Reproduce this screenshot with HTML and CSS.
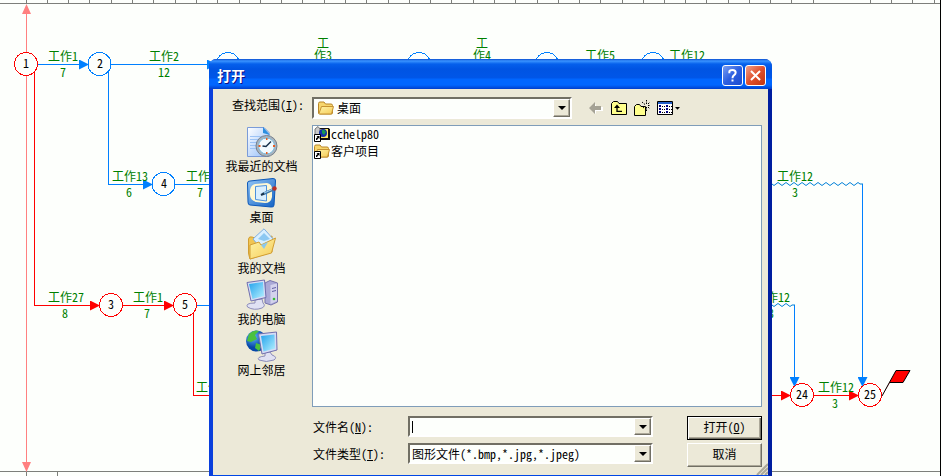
FILE: index.html
```html
<!DOCTYPE html>
<html lang="zh-CN">
<head>
<meta charset="utf-8">
<title>打开</title>
<link rel="stylesheet" href="styles.css">
</head>
<body>
<main class="chart">
<svg class="network" aria-label="网络图">
  <defs>
    <marker id="arrow-blue" markerUnits="userSpaceOnUse" markerWidth="10" markerHeight="10" refX="9" refY="5" orient="auto"><path class="fill-blue" d="M0 0L10 5L0 10Z"/></marker>
    <marker id="arrow-red" markerUnits="userSpaceOnUse" markerWidth="10" markerHeight="10" refX="9" refY="5" orient="auto"><path class="fill-red" d="M0 0L10 5L0 10Z"/></marker>
  </defs>
  <g class="ruler">
    <path d="M0 3.500H940M26.500 0V3M47.500 0V3M68.500 0V3M89.500 0V3M111.500 0V3M132.500 0V3M153.500 0V3M175.500 0V3M196.500 0V3M217.500 0V3M239.500 0V3M260.500 0V3M281.500 0V3M302.500 0V3M324.500 0V3M345.500 0V3M366.500 0V3M388.500 0V3M409.500 0V3M430.500 0V3M451.500 0V3M473.500 0V3M494.500 0V3M515.500 0V3M537.500 0V3M558.500 0V3M579.500 0V3M600.500 0V3M622.500 0V3M643.500 0V3M664.500 0V3M685.500 0V3M706.500 0V3M728.500 0V3M749.500 0V3M770.500 0V3M791.500 0V3M813.500 0V3M870.500 0V3M891.500 0V3M912.500 0V3M934.500 0V3"/>
    <path d="M0 471.500H940M26.500 472V476M57.500 472V476"/>
  </g>
  <path class="edge-frame" d="M940.500 0V476"/>
  <path class="axis" d="M26.500 10V464"/>
  <path class="axis-tip" d="M26.500 4L31 14H22ZM22 462H31L26.500 472Z"/>

  <g class="line blue">
    <path d="M37 64.500H88" marker-end="url(#arrow-blue)"/>
    <path d="M111 64.500H216" marker-end="url(#arrow-blue)"/>
    <path d="M108.500 70V184.500H152" marker-end="url(#arrow-blue)"/>
    <path d="M175 184.500H215M196 305.500H215"/>
    <path d="M862.500 184V386" marker-end="url(#arrow-blue)"/>
    <path d="M794.500 305V386" marker-end="url(#arrow-blue)"/>
  </g>
  <g class="line red">
    <path d="M34.500 70V305.500H99" marker-end="url(#arrow-red)"/>
    <path d="M122 305.500H173" marker-end="url(#arrow-red)"/>
    <path d="M193.500 312V395.500H215"/>
    <path d="M765 395.500H790" marker-end="url(#arrow-red)"/>
    <path d="M813 395.500H858" marker-end="url(#arrow-red)"/>
  </g>
  <path class="wave" d="M772 184q2 3 4 0t4 0t4 0t4 0t4 0t4 0t4 0t4 0t4 0t4 0t4 0t4 0t4 0t4 0t4 0t4 0t4 0t4 0t4 0t4 0t4 0t4 0h3M772 305q2 3 4 0t4 0t4 0t4 0t4 0h3"/>

  <g class="node blue">
    <circle cx="99.500" cy="64" r="11.500"/><circle cx="163.500" cy="184" r="11.500"/>
    <circle cx="228" cy="64" r="11.500"/><circle cx="419" cy="64" r="11.500"/>
    <circle cx="547" cy="64" r="11.500"/><circle cx="653" cy="64" r="11.500"/>
  </g>
  <g class="node red">
    <circle cx="26" cy="64" r="11.500"/><circle cx="111" cy="305" r="11.500"/><circle cx="185" cy="305" r="11.500"/>
    <circle cx="802" cy="395" r="11.500"/><circle cx="870" cy="395" r="11.500"/>
  </g>
  <g class="number">
    <text x="26" y="68">1</text><text x="100" y="68">2</text><text x="164" y="188">4</text>
    <text x="111" y="309">3</text><text x="185" y="309">5</text><text x="802" y="399">24</text><text x="870" y="399">25</text>
  </g>
  <g class="task">
    <text x="48" y="61">工作1</text><text x="60" y="77">7</text>
    <text x="149" y="61">工作2</text><text x="158" y="77">12</text>
    <text x="112" y="181">工作13</text><text x="126" y="197">6</text>
    <text x="186" y="181">工作1</text><text x="197" y="197">7</text>
    <text x="48" y="302">工作27</text><text x="62" y="318">8</text>
    <text x="133" y="302">工作1</text><text x="144" y="318">7</text>
    <text x="196" y="392">工作1</text>
    <text x="317" y="48">工</text><text x="314" y="60">作3</text>
    <text x="476" y="48">工</text><text x="473" y="60">作4</text>
    <text x="585" y="60">工作5</text><text x="669" y="60">工作12</text>
    <text x="777" y="181">工作12</text><text x="792" y="197">3</text>
    <text x="754" y="302">工作12</text><text x="768" y="318">3</text>
    <text x="818" y="392">工作12</text><text x="832" y="408">3</text>
  </g>
  <path class="flag" d="M882 396L896 370.500H910L903 382.500H890"/>
</svg>
</main>

<section class="dialog" role="dialog" aria-labelledby="dialog-title">
  <header class="titlebar">
    <h1 id="dialog-title">打开</h1>
    <button class="caption help" type="button" aria-label="帮助"><svg viewBox="0 0 21 21"><path d="M7 8V6.500Q7 4.500 10.500 4.500T14 7.500Q14 9 12 10.300Q10.500 11.300 10.500 13.500M10.500 15V17.200"/></svg></button>
    <button class="caption close" type="button" aria-label="关闭"><svg viewBox="0 0 21 21"><path d="M5.500 5.500L15.500 15.500M15.500 5.500L5.500 15.500"/></svg></button>
  </header>
  <form class="content">
    <label class="look-label" for="look-in">查找范围(<u>I</u>):</label>
    <div class="look-row">
      <div class="combo look">
        <svg class="icon16" viewBox="0 0 16 16"><use href="#folder"/></svg>
        <select id="look-in"><option>桌面</option></select>
        <span class="drop"></span>
      </div>
      <div class="tools">
        <button type="button" aria-label="后退"><svg viewBox="0 0 16 16"><path fill="#fff" d="M3 9L8 4V7H15V11H8V14Z"/><path fill="#a5a295" d="M1 8L7 2V6H13V10H7V14Z"/></svg></button>
        <button type="button" aria-label="向上一级"><svg viewBox="0 0 16 16"><path fill="#ffff8c" stroke="#000" d="M.5 14.500V3.500L2.500 1.500H6.500L8 3.500H15.500V14.500Z"/><path fill="none" stroke="#000" stroke-width="1.300" d="M6 6V11.300H11"/><path d="M3 8L6 4.500L9 8Z"/></svg></button>
        <button type="button" aria-label="新建文件夹"><svg viewBox="0 0 16 16"><path fill="#ffff8c" stroke="#000" d="M.5 15.500V6.500L2.500 4.500H5.500L7 6.500H11.500V15.500Z"/><path stroke="#000" stroke-dasharray="1.500 1" d="M12.500 0V4M12.500 7V11M8 2L11 4.500M14 7L16 9M9 8L11 6.500M14 4L16 2M14 5.500H16"/></svg></button>
        <button class="views" type="button" aria-label="查看"><svg viewBox="0 0 24 16"><path fill="#fff" stroke="#000" d="M.5 1.500H15.500V14.500H.5Z"/><path fill="#2461c9" d="M1 2H15V4H1Z"/><path fill="#000080" d="M2 5H4V7H2ZM2 8H4V10H2ZM2 11H4V13H2ZM9 5H11V7H9ZM9 8H11V10H9ZM9 11H11V13H9Z"/><path stroke="#000" stroke-dasharray="1 1" d="M5 6.500H8M5 9.500H8M5 12.500H8M12 6.500H15M12 9.500H15M12 12.500H15"/><path d="M18 7H23L20.500 9.700Z"/></svg></button>
      </div>
    </div>

    <nav class="places" aria-label="位置">
      <button type="button"><svg viewBox="0 0 32 32"><path fill="url(#paper)" stroke="#7a9bd8" d="M1.500 1.500H18L23 6.500V30.500H1.500Z"/><path fill="#2c8fe0" d="M17 1L24 9L17 7Z"/><path stroke="#9cc3f5" d="M4 10.500H17M4 13.500H14M4 16.500H12M4 19.500H11M4 22.500H12"/><circle cx="20.500" cy="20" r="10.500" fill="#a9b4bf" stroke="#75818d"/><circle cx="20.500" cy="20" r="8" fill="#f2fbff" stroke="#78b9dc"/><path fill="none" stroke="#17324b" stroke-width="1.500" d="M25 15.500L20 20.500L16.500 20"/><path fill="#e85d20" d="M20 12H21.500V14H20ZM20 26H21.500V28H20ZM12.500 19H14.500V21H12.500ZM27 19H29V21H27Z"/></svg><span>我最近的文档</span></button>
      <button type="button"><svg viewBox="0 0 32 32"><path fill="url(#desk)" stroke="#0c58b9" d="M1.500 6Q1.500 4 4 4L27 1.500Q30 1.500 29.500 4L28 28Q28 30.500 25 30L4 28Q2 28 2 25Z"/><path fill="#fff8d3" d="M9 7L21 6Q26 7 26 12V20Q25 26 19 26L10 25Q4 23 4 18V13Q5 8 9 7Z"/><path fill="#d9efff" stroke="#4c91dc" d="M9.500 9.500L20.500 8.500V24L9.500 22.500Z"/><path stroke="#3f78a8" stroke-width="3" d="M17 17L27 12.500"/><path stroke="#a5d4f5" d="M18 16L26 12.500"/><path stroke="#17324b" stroke-width="2" d="M15 18L18 16.500"/><circle cx="28.500" cy="11.500" r="2.200" fill="#ba3026"/></svg><span>桌面</span></button>
      <button type="button"><svg viewBox="0 0 32 32"><path fill="#f1c553" stroke="#d29e32" d="M2.500 11Q3 8 6 9L9 10L10 13L26 8V24L4 31Q3 28 2.500 25Z"/><path fill="#d8efff" stroke="#7faee0" d="M7 11L18 .8L28 12L18 24Z"/><path fill="#8cc8f2" d="M12 11L18 5L24 11L18 13Z"/><path fill="url(#gold)" stroke="#d29e32" d="M4 17L13 14L15 17L29.500 10L25.500 25L4 31Z"/><path fill="#8bc8ee" d="M15 17L22 14L18 21Z"/></svg><span>我的文档</span></button>
      <button type="button"><svg viewBox="0 0 32 32"><path fill="#aaa9d6" stroke="#7774ac" d="M19 4L24 1.500L31.500 4V23L25 26L19 24Z"/><path fill="#d4d3ed" d="M24.500 6L31 4.500V22L24.500 25Z"/><path stroke="#6260a5" d="M26 9.500L30 8.500M26 12.500L30 11.500"/><circle cx="28" cy="20" r="1.300" fill="#36bd32"/><path fill="#e0e1f3" stroke="#8c8cba" d="M9 21L16 20L17 24Q20 27 16 29Q8 32 1.500 28Q-1 24 9 24Z"/><path fill="#d6dcf5" stroke="#706fae" d="M1 3.500L18.500 1L20 18.500L5 22Z"/><path fill="url(#screen)" d="M3 5L17 3L18 17L6.500 20Z"/></svg><span>我的电脑</span></button>
      <button type="button"><svg viewBox="0 0 32 32"><circle cx="10.500" cy="11" r="10.500" fill="url(#globe)"/><path fill="#4bc13d" d="M3 4Q8 -1 13 1L9 5L11 9L5 12L1 11ZM10 13L16 15L13 21L9 18ZM16 3L20 7L17 10Z"/><path fill="#e0e1f3" stroke="#8c8cba" d="M19 22H24L26 25Q32 27 28 30Q20 33 13 30Q10 27 19 26Z"/><path fill="#d6dcf5" stroke="#706fae" d="M12.500 4L30.500 2L31 20L16 24Z"/><path fill="url(#screen)" d="M15 6L28.500 4.500L29 18.500L17.500 21.500Z"/></svg><span>网上邻居</span></button>
    </nav>

    <ul class="files">
      <li><button type="button"><svg class="icon16" viewBox="0 0 16 16"><path fill="#ffec65" stroke="#111" d="M3.500 2.500H15V13H3.500Z"/><path fill="#c9c9c9" stroke="#777" d="M1 12V3L4 .5L6 3V12Z"/><path fill="#111" d="M14 3H16V14H5V12H14Z"/><circle cx="9" cy="7" r="4" fill="#1230a5"/><path fill="#149b52" d="M8 4H10L12 6L10 9L8 7Z"/><use href="#shortcut"/></svg>cchelp80</button></li>
      <li><button type="button"><svg class="icon16" viewBox="0 0 16 16"><use href="#folder"/><use href="#shortcut"/></svg>客户项目</button></li>
    </ul>

    <div class="fields">
      <label for="file-name">文件名(<u>N</u>):</label>
      <div class="combo"><input id="file-name" type="text" placeholder=" "><span class="drop"></span></div>
      <button class="action default" type="submit">打开(<u>O</u>)</button>
      <label for="file-type">文件类型(<u>T</u>):</label>
      <div class="combo"><select id="file-type"><option>图形文件(*.bmp,*.jpg,*.jpeg)</option></select><span class="drop"></span></div>
      <button class="action" type="button">取消</button>
    </div>
  </form>
  <svg class="grip" viewBox="0 0 12 12"><path d="M1 12L12 1M5 12L12 5M9 12L12 9"/></svg>
</section>

<svg class="symbols" aria-hidden="true">
  <defs>
    <linearGradient id="paper" x2="1" y2="1"><stop stop-color="#fff"/><stop offset="1" stop-color="#91bdfa"/></linearGradient>
    <linearGradient id="desk" x2="1" y2="1"><stop stop-color="#94c7f6"/><stop offset="1" stop-color="#1261c4"/></linearGradient>
    <linearGradient id="gold" x2="1" y2="1"><stop stop-color="#fff4a8"/><stop offset="1" stop-color="#f5cc58"/></linearGradient>
    <linearGradient id="screen" x2="1" y2="1"><stop stop-color="#23a2ec"/><stop offset="1" stop-color="#b5f1ff"/></linearGradient>
    <radialGradient id="globe" cx=".35" cy=".3"><stop stop-color="#65b9ff"/><stop offset="1" stop-color="#0647a8"/></radialGradient>
    <g id="folder"><path fill="#f7d66d" stroke="#b98628" d="M.5 13V3.500Q.5 2 2 2H6L7.500 4H13Q14.500 4 14.500 5.500V13Q14.500 14 13 14H2Q.5 14 .5 13Z"/><path fill="url(#gold)" stroke="#c69332" d="M1 13.500L3.500 6.500H15.500L13.500 14H1.500Z"/></g>
    <g id="shortcut"><path fill="#fff" stroke="#000" d="M.5 8.500H6.500V15.500H.5Z"/><path d="M2.500 10H5.500V13L4.500 12L3 14H2V12.500L3.500 11Z"/></g>
  </defs>
</svg>
</body>
</html>
```
FILE: styles.css
```css
* { box-sizing: border-box; }

body,
button,
input,
select {
  font-family: "Noto Sans CJK SC", sans-serif;
  font-size: 12px;
  font-feature-settings: "hwid";
  color: #000;
}

body {
  margin: 0;
  height: 100vh;
  overflow: hidden;
  position: relative;
  background: #fdfffc;
  line-height: 16px;
}

button {
  padding: 0;
  border: 0;
  background: none;
  line-height: 16px;
}

.chart { height: 100%; }
.network { display: block; width: 100%; height: 100%; }
.symbols { position: absolute; width: 0; height: 0; }

.ruler path { stroke: #7d7f7b; fill: none; shape-rendering: crispEdges; }
.edge-frame { stroke: #000; shape-rendering: crispEdges; }
.axis { stroke: #ff8080; shape-rendering: crispEdges; }
.axis-tip { fill: #ff8080; }
.line path { fill: none; shape-rendering: crispEdges; }
.line.blue path { stroke: #0080ff; }
.line.red path { stroke: #f00; }
.fill-blue { fill: #0080ff; }
.fill-red { fill: #f00; }
.wave { fill: none; stroke: #0080d8; }
.node circle { fill: #fdfffc; shape-rendering: crispEdges; }
.node.blue circle { stroke: #0080ff; }
.node.red circle { stroke: #f00; }
.number text { text-anchor: middle; }
.task text { fill: #008000; }
.flag { fill: #f00; stroke: #000; }

.dialog {
  position: absolute;
  top: 59px;
  left: 209px;
  width: 563px;
  border: solid #0831d9;
  border-width: 0 4px 4px;
  border-color: #0831d9 #001ea0 #0046e5 #0a3fdc;
  border-radius: 8px 8px 0 0;
  background: #ece9d8;
}

.titlebar {
  display: flex;
  align-items: center;
  gap: 2px;
  height: 30px;
  margin: 0 -4px;
  padding: 2px 6px 0 8px;
  border-radius: 7px 7px 0 0;
  background: linear-gradient(#0a4fd0 0, #3a94ff 2px, #0560ec 5px, #0054e3 10px, #0056e8 19px, #0066ff 20px, #0066ff 26px, #003ecb 30px);
}

.titlebar h1 {
  flex: 1;
  margin: 0;
  font-size: 14px;
  line-height: 20px;
  color: #fff;
  text-shadow: 1px 1px #0f1089;
}

.caption {
  width: 21px;
  height: 21px;
  border: 1px solid #fff;
  border-radius: 3px;
}
.caption svg { display: block; width: 100%; height: 100%; fill: none; stroke: #fff; stroke-width: 2.2; }
.help { background: linear-gradient(135deg, #7a9ff2, #2d5fe0 50%, #1c4bd0); }
.close { background: linear-gradient(135deg, #f0a08a, #e0502c 50%, #c2340f); }

.content {
  display: grid;
  grid-template-columns: 97px 1fr;
  column-gap: 2px;
  padding: 8px 6px 8px 0;
}

.look-label { justify-self: end; padding-right: 6px; }
.look-row { display: flex; align-items: center; gap: 16px; height: 22px; }
.look { width: 260px; }

.combo {
  display: flex;
  align-items: center;
  height: 21px;
  padding: 0 0 0 2px;
  border: 2px solid;
  border-color: #716f64 #fff #fff #716f64;
  background: #fdfffc;
}
.combo.look { height: 22px; padding-left: 4px; }
.combo select,
.combo input {
  flex: 1;
  min-width: 0;
  height: 16px;
  padding: 0;
  border: 0;
  outline: 0;
  appearance: none;
  background: transparent;
  line-height: 16px;
}
.combo input:placeholder-shown {
  background: linear-gradient(#000, #000) 0 2px / 1px 12px no-repeat;
  caret-color: transparent;
}
.look select { padding-left: 3px; }

.drop {
  display: grid;
  place-items: center;
  align-self: stretch;
  width: 17px;
  border: 1px solid;
  border-color: #fff #716f64 #716f64 #fff;
  box-shadow: inset -1px -1px #aca899;
  background: #ece9d8;
}
.drop::before {
  content: "";
  border: solid transparent;
  border-width: 4px 4px 0;
  border-top-color: #000;
}

.icon16 { flex: none; width: 16px; height: 16px; }

.tools { display: flex; gap: 7px; }
.tools button { width: 16px; height: 16px; }
.tools .views { width: 24px; }
.tools svg { display: block; width: 100%; height: 100%; }

.places {
  grid-row: 2 / 4;
  display: flex;
  flex-direction: column;
  gap: 3px;
  padding-top: 7px;
}
.places button { display: flex; flex-direction: column; align-items: center; }
.places svg { width: 32px; height: 32px; }

.files {
  height: 282px;
  margin: 6px 0 0;
  padding: 0 1px;
  border: 1px solid #7f9db9;
  background: #fdfffc;
  list-style: none;
}
.files li { height: 17px; }
.files button { display: flex; align-items: center; gap: 1px; }

.fields {
  grid-column: 2;
  display: grid;
  grid-template-columns: 96px 1fr 75px;
  grid-auto-rows: 24px;
  row-gap: 3px;
  margin-top: 9px;
}
.fields label { padding: 3px 0 0 1px; }
.fields .combo { margin-right: 34px; }

.action {
  padding-bottom: 2px;
  border: 1px solid;
  border-color: #fff #716f64 #716f64 #fff;
  box-shadow: inset -1px -1px #aca899;
  background: #ece9d8;
}
.action.default {
  border-color: #000;
  box-shadow: inset 1px 1px #fff, inset -1px -1px #716f64, inset -2px -2px #aca899;
}

.grip { position: absolute; right: 0; bottom: 0; width: 12px; height: 12px; fill: none; stroke: #aca899; stroke-width: 2; }
```
